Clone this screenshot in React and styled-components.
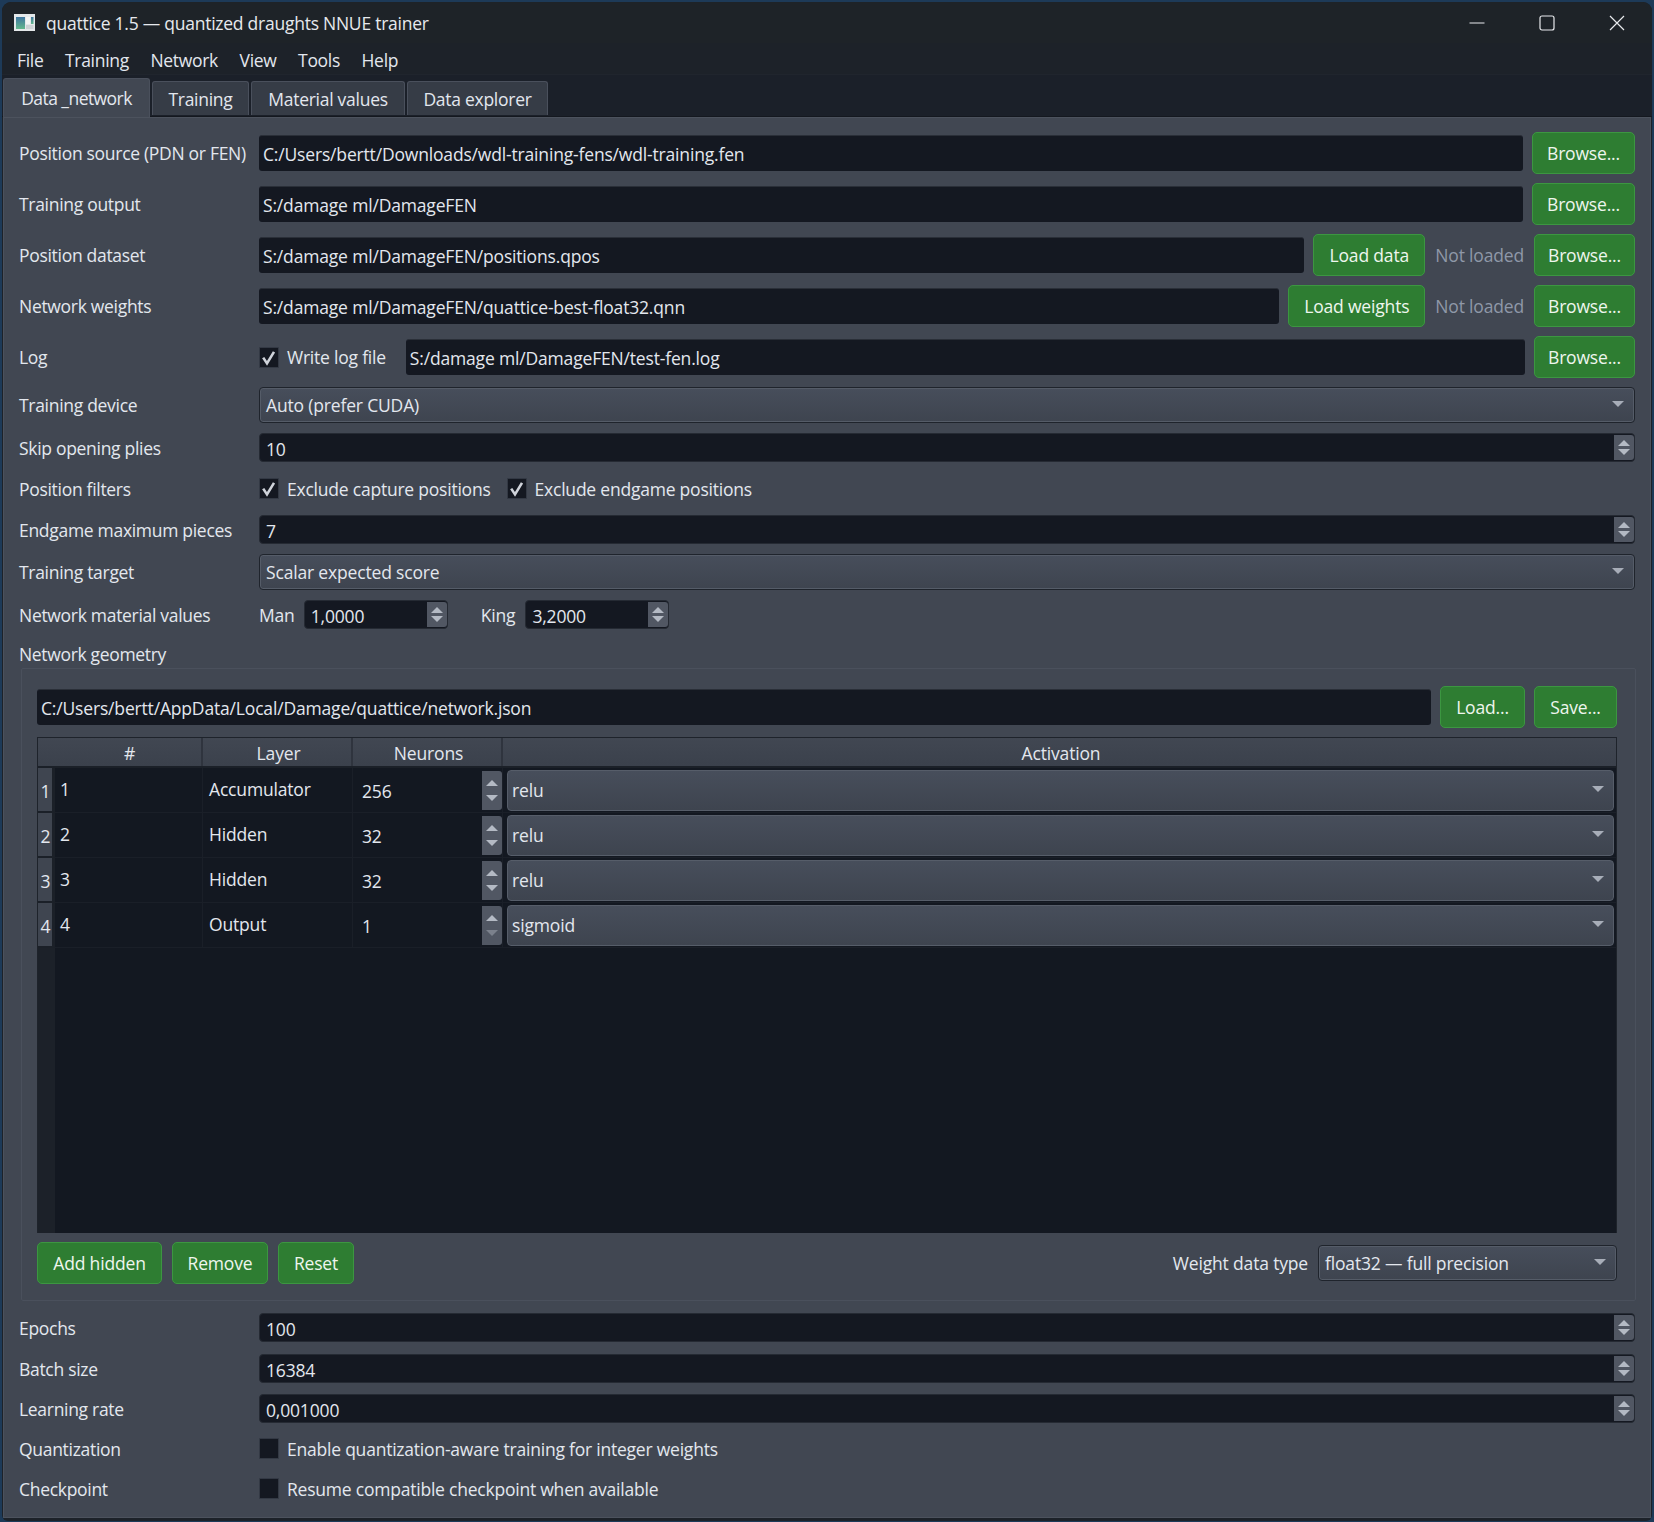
import React from 'react'
import styled, { createGlobalStyle } from 'styled-components'

const paths = {
  source: 'C:/Users/bertt/Downloads/wdl-training-fens/wdl-training.fen',
  output: 'S:/damage ml/DamageFEN',
  dataset: 'S:/damage ml/DamageFEN/positions.qpos',
  weights: 'S:/damage ml/DamageFEN/quattice-best-float32.qnn',
  log: 'S:/damage ml/DamageFEN/test-fen.log',
  network: 'C:/Users/bertt/AppData/Local/Damage/quattice/network.json',
}

const layers = [
  { id: 1, name: 'Accumulator', neurons: 256, activation: 'relu' },
  { id: 2, name: 'Hidden', neurons: 32, activation: 'relu' },
  { id: 3, name: 'Hidden', neurons: 32, activation: 'relu' },
  { id: 4, name: 'Output', neurons: 1, activation: 'sigmoid', atMin: true },
]

function SpinButtons({ atMin, tall }) {
  return (
    <SpinCol $tall={tall}>
      <Arrow $dir="up" />
      <Arrow $dir="down" $dim={atMin} />
    </SpinCol>
  )
}

function SpinBox({ value, width }) {
  return (
    <Spin style={width ? { width } : undefined}>
      <SpinValue>{value}</SpinValue>
      <SpinButtons />
    </Spin>
  )
}

function Check({ checked, label }) {
  return (
    <CheckLabel>
      <CheckBox>
        {checked && (
          <svg width="18" height="19" viewBox="0 0 18 19">
            <path d="M3.2 9.6 L7 15.4 L14 3.8" fill="none" stroke="#cfd3da" strokeWidth="2.6" />
          </svg>
        )}
      </CheckBox>
      <span>{label}</span>
    </CheckLabel>
  )
}

export default function App() {
  return (
    <>
      <GlobalStyle />
      <Desktop>
        <Window>
          <TitleBar>
            <AppIcon viewBox="0 0 21 17">
              <defs>
                <linearGradient id="iconFill" x1="0" y1="0" x2="0" y2="1">
                  <stop offset="0" stopColor="#3f76a0" />
                  <stop offset="1" stopColor="#62b78c" />
                </linearGradient>
              </defs>
              <rect width="21" height="17" fill="#e4e8ea" />
              <rect x="2" y="3" width="9" height="12" fill="url(#iconFill)" />
              <rect x="12" y="3" width="4" height="7" fill="#f3f5f5" />
              <rect x="17" y="3" width="2.5" height="7" fill="url(#iconFill)" />
              <rect x="12" y="11" width="7.5" height="4" fill="#cdd2d5" />
            </AppIcon>
            <TitleText>quattice 1.5 — quantized draughts NNUE trainer</TitleText>
            <WinControls>
              <WinButton>
                <svg width="16" height="16" viewBox="0 0 16 16">
                  <path d="M0.5 8 H15.5" stroke="#e8eaed" strokeWidth="1.2" />
                </svg>
              </WinButton>
              <WinButton>
                <svg width="16" height="16" viewBox="0 0 16 16">
                  <rect x="1" y="1" width="14" height="14" rx="2" fill="none" stroke="#e8eaed" strokeWidth="1.2" />
                </svg>
              </WinButton>
              <WinButton>
                <svg width="16" height="16" viewBox="0 0 16 16">
                  <path d="M1 1 L15 15 M15 1 L1 15" stroke="#e8eaed" strokeWidth="1.2" />
                </svg>
              </WinButton>
            </WinControls>
          </TitleBar>
          <MenuBar>
            {['File', 'Training', 'Network', 'View', 'Tools', 'Help'].map((m) => (
              <MenuItem key={m}>{m}</MenuItem>
            ))}
          </MenuBar>
          <TabBar>
            <Tab $active $w={147}>Data _network</Tab>
            <Tab $w={97}>Training</Tab>
            <Tab $w={154}>Material values</Tab>
            <Tab $w={141}>Data explorer</Tab>
          </TabBar>
          <Panel>
            <Row $h={42} $top={14}>
              <Label>Position source (PDN or FEN)</Label>
              <Field>
                <PathInput>{paths.source}</PathInput>
                <GreenButton $w={103}>Browse...</GreenButton>
              </Field>
            </Row>
            <Row $h={42} $top={9}>
              <Label>Training output</Label>
              <Field>
                <PathInput>{paths.output}</PathInput>
                <GreenButton $w={103}>Browse...</GreenButton>
              </Field>
            </Row>
            <Row $h={42} $top={9}>
              <Label>Position dataset</Label>
              <Field>
                <PathInput>{paths.dataset}</PathInput>
                <GreenButton $w={112}>Load data</GreenButton>
                <Status>Not loaded</Status>
                <GreenButton $w={101}>Browse...</GreenButton>
              </Field>
            </Row>
            <Row $h={42} $top={9}>
              <Label>Network weights</Label>
              <Field>
                <PathInput>{paths.weights}</PathInput>
                <GreenButton $w={137}>Load weights</GreenButton>
                <Status>Not loaded</Status>
                <GreenButton $w={101}>Browse...</GreenButton>
              </Field>
            </Row>
            <Row $h={42} $top={9}>
              <Label>Log</Label>
              <Field>
                <Check checked label="Write log file" />
                <PathInput $log>{paths.log}</PathInput>
                <GreenButton $w={101}>Browse...</GreenButton>
              </Field>
            </Row>
            <Row $h={36} $top={9}>
              <Label>Training device</Label>
              <Combo>Auto (prefer CUDA)</Combo>
            </Row>
            <Row $h={29} $top={10}>
              <Label>Skip opening plies</Label>
              <SpinBox value="10" />
            </Row>
            <Row $h={33} $top={10}>
              <Label>Position filters</Label>
              <FilterField>
                <Check checked label="Exclude capture positions" />
                <Check checked label="Exclude endgame positions" />
              </FilterField>
            </Row>
            <Row $h={29} $top={10}>
              <Label>Endgame maximum pieces</Label>
              <SpinBox value="7" />
            </Row>
            <Row $h={36} $top={10}>
              <Label>Training target</Label>
              <Combo>Scalar expected score</Combo>
            </Row>
            <Row $h={29} $top={10}>
              <Label>Network material values</Label>
              <MaterialField>
                <ManLabel>Man</ManLabel>
                <SpinBox value="1,0000" width={144} />
                <KingLabel>King</KingLabel>
                <SpinBox value="3,2000" width={144} />
              </MaterialField>
            </Row>
            <GroupTitle>Network geometry</GroupTitle>
            <GroupBox>
              <GeometryPath>
                <PathInput>{paths.network}</PathInput>
                <GreenButton $w={85}>Load...</GreenButton>
                <GreenButton $w={83}>Save...</GreenButton>
              </GeometryPath>
              <Table>
                <TableHead>
                  <Corner />
                  <HeadCell>#</HeadCell>
                  <HeadCell>Layer</HeadCell>
                  <HeadCell>Neurons</HeadCell>
                  <HeadCell $last>Activation</HeadCell>
                </TableHead>
                <TableBody>
                  <RowHeaders>
                    {layers.map((l) => (
                      <RowHeader key={l.id}>{l.id}</RowHeader>
                    ))}
                  </RowHeaders>
                  <Cells>
                    {layers.map((l) => (
                      <TableRow key={l.id}>
                        <Cell>{l.id}</Cell>
                        <Cell $pad={6}>{l.name}</Cell>
                        <NeuronCell>
                          <span>{l.neurons}</span>
                          <SpinButtons atMin={l.atMin} tall />
                        </NeuronCell>
                        <ComboCell>
                          <Combo $small>{l.activation}</Combo>
                        </ComboCell>
                      </TableRow>
                    ))}
                  </Cells>
                </TableBody>
              </Table>
              <GroupFooter>
                <GreenButton $w={125}>Add hidden</GreenButton>
                <GreenButton $w={96}>Remove</GreenButton>
                <GreenButton $w={76}>Reset</GreenButton>
                <WeightType>
                  <span>Weight data type</span>
                  <Combo $w={299}>float32 — full precision</Combo>
                </WeightType>
              </GroupFooter>
            </GroupBox>
            <Row $h={29} $top={12}>
              <Label>Epochs</Label>
              <SpinBox value="100" />
            </Row>
            <Row $h={29} $top={12}>
              <Label>Batch size</Label>
              <SpinBox value="16384" />
            </Row>
            <Row $h={29} $top={11}>
              <Label>Learning rate</Label>
              <SpinBox value="0,001000" />
            </Row>
            <Row $h={29} $top={11}>
              <Label>Quantization</Label>
              <Check label="Enable quantization-aware training for integer weights" />
            </Row>
            <Row $h={29} $top={11}>
              <Label>Checkpoint</Label>
              <Check label="Resume compatible checkpoint when available" />
            </Row>
          </Panel>
        </Window>
      </Desktop>
    </>
  )
}

const GlobalStyle = createGlobalStyle`
  html, body {
    margin: 0;
    padding: 0;
    background: #1d3a58;
  }
  * {
    box-sizing: border-box;
  }
`;

const Desktop = styled.div`
  width: 1654px;
  height: 1522px;
  padding: 2px 2px 1px 2px;
  background: #1d3a58;
  font-family: 'Open Sans', 'Noto Sans', sans-serif;
  font-size: 17.5px;
  letter-spacing: -0.17px;
  color: #e3e7ee;
`;
const Window = styled.div`
  height: 100%;
  display: flex;
  flex-direction: column;
  background: #1d2229;
  border-radius: 9px 9px 6px 6px;
  overflow: hidden;
`;
const TitleBar = styled.div`
  height: 41px;
  flex: none;
  display: flex;
  align-items: center;
  padding-left: 12px;
  background: #1e2328;
`;
const AppIcon = styled.svg`
  width: 21px;
  height: 17px;
  margin-right: 11px;
`;
const TitleText = styled.div`
  flex: 1;
  color: #e6e9ed;
  letter-spacing: -0.25px;
`;
const WinControls = styled.div`
  display: flex;
  height: 100%;
`;
const WinButton = styled.div`
  width: 70px;
  display: flex;
  align-items: center;
  justify-content: center;
`;
const MenuBar = styled.div`
  height: 32px;
  flex: none;
  display: flex;
  align-items: center;
  gap: 21.5px;
  padding: 2px 0 0 15px;
  background: #1d2229;
  border-bottom: 1px solid #20252d;
`;
const MenuItem = styled.div`
  color: #e3e7ee;
  letter-spacing: -0.3px;
`;
const TabBar = styled.div`
  height: 42px;
  flex: none;
  display: flex;
  align-items: flex-end;
  gap: 2px;
  padding-left: 1px;
  background: #1b2029;
  border-bottom: 1px solid #14181f;
`;
const Tab = styled.div`
  width: ${(p) => p.$w}px;
  height: ${(p) => (p.$active ? 39 : 34)}px;
  margin-bottom: ${(p) => (p.$active ? -1 : 1)}px;
  padding-top: ${(p) => (p.$active ? 0 : 1)}px;
  display: flex;
  align-items: center;
  justify-content: center;
  letter-spacing: ${(p) => (p.$active ? -0.55 : -0.27)}px;
  border: 1px solid #4a505c;
  border-bottom: none;
  border-radius: 3px 3px 0 0;
  background: ${(p) => (p.$active ? '#414752' : '#363c46')};
  position: relative;
`;
const Panel = styled.div`
  flex: 1;
  margin: 0 1px 3px 1px;
  padding: 0 15px;
  display: flex;
  flex-direction: column;
  background: #414752;
  border: 1px solid #4c525d;
`;
const Row = styled.div`
  height: ${(p) => p.$h}px;
  margin-top: ${(p) => p.$top}px;
  flex: none;
  display: grid;
  grid-template-columns: 240px 1fr;
  align-items: center;
`;
const Label = styled.div`
  white-space: nowrap;
  letter-spacing: -0.3px;
`;
const Field = styled.div`
  display: flex;
  align-items: center;
  gap: 9px;
  height: 100%;
`;
const PathInput = styled.div`
  flex: 1;
  min-width: 0;
  height: 36px;
  display: flex;
  align-items: center;
  padding-left: 4px;
  margin-left: ${(p) => (p.$log ? '11px' : '0')};
  background: #141821;
  border-radius: 3px;
  border-top: 1px solid #2a2f38;
`;
const GreenButton = styled.div`
  width: ${(p) => p.$w}px;
  height: 42px;
  flex: none;
  display: flex;
  align-items: center;
  justify-content: center;
  background: #2e7d32;
  border: 1px solid #3c9641;
  border-radius: 5px;
  color: #eef6ee;
`;
const Status = styled.div`
  color: #8f98a8;
  white-space: nowrap;
  padding: 0 1px;
`;
const Combo = styled.div`
  width: ${(p) => (p.$w ? `${p.$w}px` : '100%')};
  height: ${(p) => (p.$small ? 41 : 36)}px;
  position: relative;
  display: flex;
  align-items: center;
  padding-left: ${(p) => (p.$small ? 4 : 6)}px;
  padding-bottom: ${(p) => (p.$small ? 1 : 0)}px;
  background: linear-gradient(#474e5b, #3e444f);
  border: 1px solid ${(p) => (p.$small ? '#565d69' : '#1f242c')};
  border-radius: 4px;
  box-shadow: inset 0 0 0 1px ${(p) => (p.$small ? 'transparent' : '#555c68')};

  &::after {
    content: '';
    position: absolute;
    right: ${(p) => (p.$small ? 9 : 10)}px;
    top: 50%;
    margin-top: -4px;
    border-left: 6px solid transparent;
    border-right: 6px solid transparent;
    border-top: 6px solid #a7adb8;
  }
`;
const Spin = styled.div`
  width: 100%;
  height: 29px;
  display: flex;
  align-items: center;
  justify-content: space-between;
  background: #141821;
  border-radius: 4px;
  border: 1px solid #252a33;
  padding: 1px 0 1px 6px;
`;
const SpinValue = styled.span`
  padding-top: 2px;
`;
const SpinCol = styled.div`
  width: 20px;
  height: 100%;
  flex: none;
  display: flex;
  flex-direction: column;
  align-items: center;
  justify-content: center;
  gap: ${(p) => (p.$tall ? 9 : 3)}px;
  background: #515763;
  border-radius: 0 3px 3px 0;
`;
const Arrow = styled.div`
  width: 0;
  height: 0;
  border-left: 6px solid transparent;
  border-right: 6px solid transparent;
  ${(p) => (p.$dir === 'up' ? 'border-bottom' : 'border-top')}: 6px solid ${(p) => (p.$dim ? '#7b818c' : '#b4bac4')};
`;
const CheckLabel = styled.div`
  display: flex;
  align-items: center;
  gap: 8px;
  white-space: nowrap;
  letter-spacing: -0.22px;
`;
const CheckBox = styled.div`
  width: 20px;
  height: 21px;
  flex: none;
  background: #141821;
  border: 1px solid #333944;
  border-radius: 1px;
`;
const FilterField = styled.div`
  display: flex;
  align-items: center;
  gap: 16px;
`;
const MaterialField = styled.div`
  display: flex;
  align-items: center;
  gap: 10px;
`;
const ManLabel = styled.span`
  margin-right: -1px;
`;
const KingLabel = styled.span`
  margin-left: 23px;
`;
const GroupTitle = styled.div`
  height: 29px;
  margin-top: 10px;
  flex: none;
  display: flex;
  align-items: center;
  letter-spacing: -0.33px;
`;
const GroupBox = styled.div`
  height: 633px;
  flex: none;
  margin-left: 2px;
  margin-right: -1px;
  padding: 17px 18px 0 15px;
  display: flex;
  flex-direction: column;
  border: 1px solid #4a505c;
  border-radius: 2px;
`;
const GeometryPath = styled.div`
  height: 42px;
  flex: none;
  display: flex;
  align-items: center;
  gap: 9px;
`;
const Table = styled.div`
  height: 496px;
  margin-top: 9px;
  flex: none;
  display: flex;
  flex-direction: column;
  background: #131821;
  border: 1px solid #1e232b;
  border-bottom: none;
`;
const TableHead = styled.div`
  height: 30px;
  flex: none;
  display: grid;
  grid-template-columns: 17px 148px 150px 150px 1fr;
  background: linear-gradient(#414752, #3b414c);
  border-bottom: 2px solid #1b2028;
`;
const Corner = styled.div``;
const HeadCell = styled.div`
  display: flex;
  align-items: center;
  justify-content: center;
  padding: 1px 0 0 3px;
  border-right: ${(p) => (p.$last ? 'none' : '2px solid #2f343e')};
`;
const TableBody = styled.div`
  flex: 1;
  display: flex;
`;
const RowHeaders = styled.div`
  width: 17px;
  flex: none;
  background: #1c2129;
`;
const RowHeader = styled.div`
  height: 45px;
  padding: 3px 0 0 1px;
  display: flex;
  align-items: center;
  justify-content: center;
  background: #3f4550;
  border-bottom: 2px solid #1b2028;
  border-right: 3px solid #1b2028;
`;
const Cells = styled.div`
  flex: 1;
`;
const TableRow = styled.div`
  height: 45px;
  display: grid;
  grid-template-columns: 148px 150px 150px 1fr;
  border-bottom: 1px solid #1a1f28;
`;
const Cell = styled.div`
  display: flex;
  align-items: center;
  padding-left: ${(p) => p.$pad ?? 5}px;
  padding-bottom: 2px;
  border-right: 1px solid #1a1f28;
`;
const NeuronCell = styled.div`
  display: flex;
  align-items: center;
  justify-content: space-between;
  padding: 3px 0 2px 9px;
  border-right: 1px solid #1a1f28;
`;
const ComboCell = styled.div`
  display: flex;
  align-items: center;
  padding: 0 2px 0 4px;
`;
const GroupFooter = styled.div`
  margin-top: 9px;
  display: flex;
  align-items: center;
  gap: 10px;
`;
const WeightType = styled.div`
  margin-left: auto;
  display: flex;
  align-items: center;
  gap: 10px;
`;
